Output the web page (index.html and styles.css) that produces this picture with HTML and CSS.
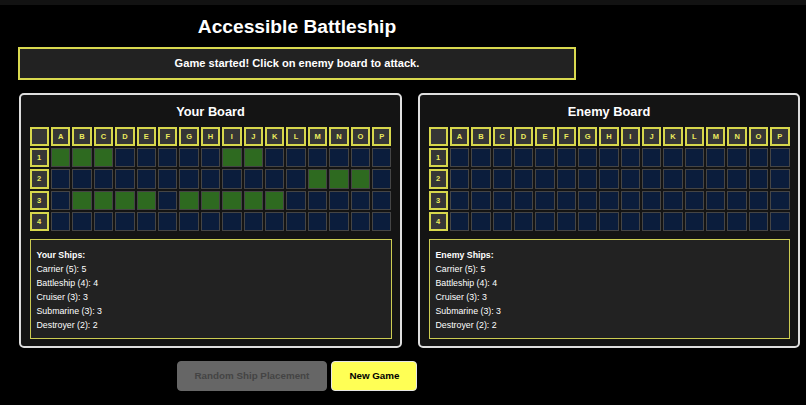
FILE: index.html
```html
<!DOCTYPE html>
<html lang="en">
<head>
<meta charset="utf-8">
<title>Accessible Battleship</title>
<link rel="stylesheet" href="styles.css">
</head>
<body>
<div class="topbar"></div>
<div class="app">
  <div class="head">
    <h1 class="title">Accessible Battleship</h1>
    <div class="status">Game started! Click on enemy board to attack.</div>
  </div>
  <div class="boards">
    <section class="panel panel-left">
      <h2 class="panel-title">Your Board</h2>
      <div class="grid">
        <div class="hd"></div><div class="hd">A</div><div class="hd">B</div><div class="hd">C</div><div class="hd">D</div><div class="hd">E</div><div class="hd">F</div><div class="hd">G</div><div class="hd">H</div><div class="hd">I</div><div class="hd">J</div><div class="hd">K</div><div class="hd">L</div><div class="hd">M</div><div class="hd">N</div><div class="hd">O</div><div class="hd">P</div>
        <div class="hd">1</div><div class="cell s"></div><div class="cell s"></div><div class="cell s"></div><div class="cell"></div><div class="cell"></div><div class="cell"></div><div class="cell"></div><div class="cell"></div><div class="cell s"></div><div class="cell s"></div><div class="cell"></div><div class="cell"></div><div class="cell"></div><div class="cell"></div><div class="cell"></div><div class="cell"></div>
        <div class="hd">2</div><div class="cell"></div><div class="cell"></div><div class="cell"></div><div class="cell"></div><div class="cell"></div><div class="cell"></div><div class="cell"></div><div class="cell"></div><div class="cell"></div><div class="cell"></div><div class="cell"></div><div class="cell"></div><div class="cell s"></div><div class="cell s"></div><div class="cell s"></div><div class="cell"></div>
        <div class="hd">3</div><div class="cell"></div><div class="cell s"></div><div class="cell s"></div><div class="cell s"></div><div class="cell s"></div><div class="cell"></div><div class="cell s"></div><div class="cell s"></div><div class="cell s"></div><div class="cell s"></div><div class="cell s"></div><div class="cell"></div><div class="cell"></div><div class="cell"></div><div class="cell"></div><div class="cell"></div>
        <div class="hd">4</div><div class="cell"></div><div class="cell"></div><div class="cell"></div><div class="cell"></div><div class="cell"></div><div class="cell"></div><div class="cell"></div><div class="cell"></div><div class="cell"></div><div class="cell"></div><div class="cell"></div><div class="cell"></div><div class="cell"></div><div class="cell"></div><div class="cell"></div><div class="cell"></div>
      </div>
      <div class="ships">
        <div class="ships-title">Your Ships:</div>
        <div>Carrier (5): 5</div>
        <div>Battleship (4): 4</div>
        <div>Cruiser (3): 3</div>
        <div>Submarine (3): 3</div>
        <div>Destroyer (2): 2</div>
      </div>
    </section>
    <section class="panel panel-right">
      <h2 class="panel-title">Enemy Board</h2>
      <div class="grid">
        <div class="hd"></div><div class="hd">A</div><div class="hd">B</div><div class="hd">C</div><div class="hd">D</div><div class="hd">E</div><div class="hd">F</div><div class="hd">G</div><div class="hd">H</div><div class="hd">I</div><div class="hd">J</div><div class="hd">K</div><div class="hd">L</div><div class="hd">M</div><div class="hd">N</div><div class="hd">O</div><div class="hd">P</div>
        <div class="hd">1</div><div class="cell"></div><div class="cell"></div><div class="cell"></div><div class="cell"></div><div class="cell"></div><div class="cell"></div><div class="cell"></div><div class="cell"></div><div class="cell"></div><div class="cell"></div><div class="cell"></div><div class="cell"></div><div class="cell"></div><div class="cell"></div><div class="cell"></div><div class="cell"></div>
        <div class="hd">2</div><div class="cell"></div><div class="cell"></div><div class="cell"></div><div class="cell"></div><div class="cell"></div><div class="cell"></div><div class="cell"></div><div class="cell"></div><div class="cell"></div><div class="cell"></div><div class="cell"></div><div class="cell"></div><div class="cell"></div><div class="cell"></div><div class="cell"></div><div class="cell"></div>
        <div class="hd">3</div><div class="cell"></div><div class="cell"></div><div class="cell"></div><div class="cell"></div><div class="cell"></div><div class="cell"></div><div class="cell"></div><div class="cell"></div><div class="cell"></div><div class="cell"></div><div class="cell"></div><div class="cell"></div><div class="cell"></div><div class="cell"></div><div class="cell"></div><div class="cell"></div>
        <div class="hd">4</div><div class="cell"></div><div class="cell"></div><div class="cell"></div><div class="cell"></div><div class="cell"></div><div class="cell"></div><div class="cell"></div><div class="cell"></div><div class="cell"></div><div class="cell"></div><div class="cell"></div><div class="cell"></div><div class="cell"></div><div class="cell"></div><div class="cell"></div><div class="cell"></div>
      </div>
      <div class="ships">
        <div class="ships-title">Enemy Ships:</div>
        <div>Carrier (5): 5</div>
        <div>Battleship (4): 4</div>
        <div>Cruiser (3): 3</div>
        <div>Submarine (3): 3</div>
        <div>Destroyer (2): 2</div>
      </div>
    </section>
  </div>
  <div class="actions">
    <button class="btn btn-disabled" disabled>Random Ship Placement</button>
    <button class="btn btn-new">New Game</button>
  </div>
</div>
</body>
</html>
```

FILE: styles.css
```css
html, body {
  margin: 0;
  background: #000;
  color: #fff;
  font-family: "Liberation Sans", Arial, sans-serif;
}

.topbar {
  height: 5px;
  background: #121212;
}

.app {
  padding-left: 18px;
}

.head {
  width: 558px;
}

.title {
  margin: 11px 0 0;
  font-size: 19.2px;
  line-height: 22px;
  font-weight: bold;
  text-align: center;
}

.status {
  margin-top: 9px;
  height: 33px;
  box-sizing: border-box;
  border: 2px solid #d9d94f;
  background: #222;
  font-size: 11.1px;
  font-weight: bold;
  line-height: 29px;
  text-align: center;
}

.boards {
  display: flex;
  gap: 16px;
  margin-top: 13px;
  padding-left: 1px;
}

.panel {
  box-sizing: border-box;
  border: 2px solid #dedede;
  border-radius: 5px;
  background: #141414;
  padding: 8px 8.5px 7px;
}

.panel-left {
  width: 383px;
}

.panel-right {
  width: 382px;
}

.panel-title {
  margin: 0;
  font-size: 12.8px;
  line-height: 17px;
  font-weight: bold;
  text-align: center;
}

.grid {
  margin-top: 6.5px;
  display: grid;
  grid-template-columns: repeat(17, 1fr);
  grid-auto-rows: 19.4px;
  gap: 2px;
}

.hd {
  box-sizing: border-box;
  background: #363636;
  border: 2px solid #d7d74c;
  color: #ecec5e;
  font-size: 7.5px;
  font-weight: bold;
  display: flex;
  align-items: center;
  justify-content: center;
}

.cell {
  box-sizing: border-box;
  background: #0b1d3c;
  border: 1.5px solid #454545;
}

.cell.s {
  background: #2e6a20;
}

.ships {
  margin-top: 7.5px;
  border: 1.5px solid #cccc52;
  background: #222;
  padding: 8px 6px 6px;
  font-size: 8.8px;
  line-height: 14px;
}

.ships-title {
  font-weight: bold;
}

.actions {
  width: 558px;
  display: flex;
  justify-content: center;
  gap: 4px;
  margin-top: 13px;
}

.btn {
  height: 30px;
  padding: 0 17px;
  border-radius: 4px;
  font-family: inherit;
  font-size: 9.8px;
  font-weight: bold;
}

.btn-disabled {
  background: #666;
  color: #444;
  border: 1px solid #666;
}

.btn-new {
  background: #ffff55;
  color: #000;
  border: 1px solid #e6e6e6;
}
```
